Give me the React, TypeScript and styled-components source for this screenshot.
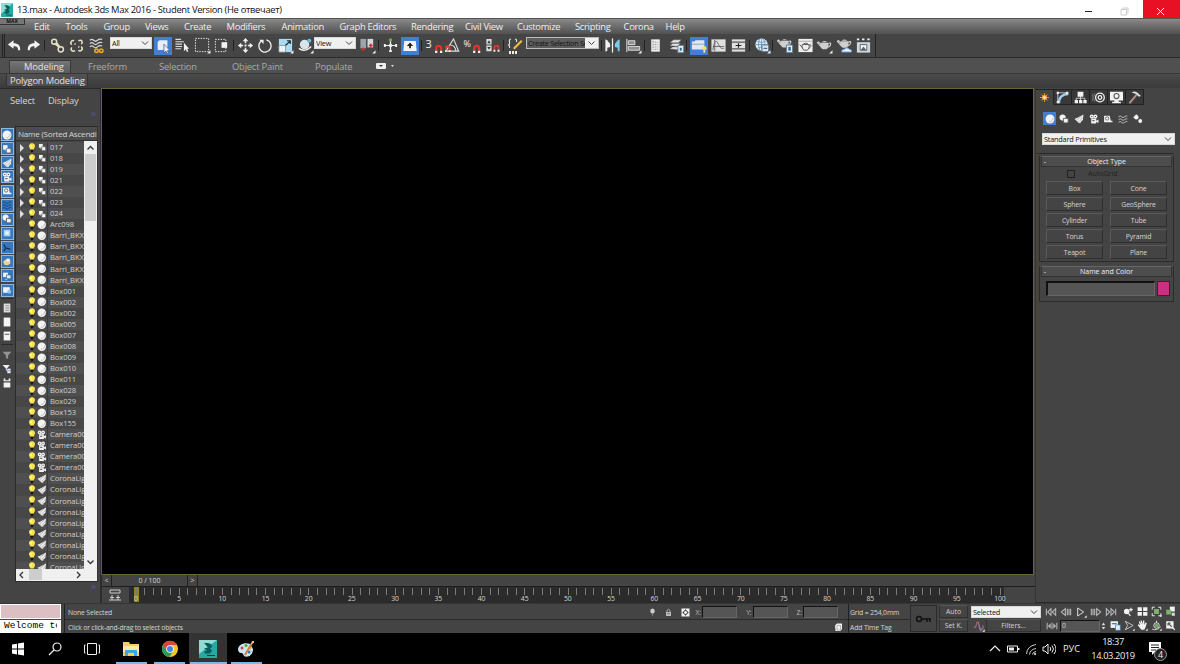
import React from 'react';
import styled, { createGlobalStyle } from 'styled-components';

const GlobalStyle = createGlobalStyle`
  * { box-sizing: border-box; }
  body { margin: 0; background: #444; overflow: hidden; }
`;

/* ---------- icons ---------- */

const W = '#f2f2f2';
const G = '#b9b9b9';
const Flyout = () => <path d="M17.500 14v3.500H14z" fill={W} />;

const Magnet = ({ x = 9, y = 9 }: { x?: number; y?: number }) => (
  <g transform={`translate(${x} ${y})`} fill="none" strokeWidth="2">
    <path d="M1 5V3a2 2 0 0 1 4.400 0V5" stroke="#e0342c" />
    <path d="M1 5v2M5.400 5v2" stroke={W} />
  </g>
);

const Teapot = ({ fill = '#cfcfcf' }: { fill?: string }) => (
  <g fill={fill}>
    <path d="M5 7h8c1 3 0 6-2 7H7C5 13 4 10 5 7z" />
    <path d="M6 6.500Q9 4 12 6.500z" />
    <path d="M5 11 1.500 7l1-.8L5.500 9zM13 8c3-2 4 1 0 4" fill="none" stroke={fill} strokeWidth="1.200" />
  </g>
);

const glyphs: Record<string, React.ReactNode> = {
  undo: <path d="M2 8 8 3.500v3c5 0 7.500 2.500 7 7.500h-2.200c0-3-1-4.200-4.800-4.200v2.700z" fill={W} />,
  redo: <path d="M16 8 10 3.500v3c-5 0-7.500 2.500-7 7.500h2.200c0-3 1-4.200 4.800-4.200v2.700z" fill={W} />,
  link: (
    <g fill="none" stroke="#e4e0c4" strokeWidth="1.600">
      <circle cx="5.500" cy="5" r="2.600" /><circle cx="12.500" cy="13" r="2.800" /><path d="m6 7 5 4M8 6l4 5" />
    </g>
  ),
  unlink: (
    <g fill="none" stroke="#e4e0c4" strokeWidth="1.600">
      <path d="M4 8C1.500 6 4 3 6.500 4M11 4c4-2 5 2 3 3.500M4 11c-2 3 1 5 3.500 3.500M14 10c3 3-1 6-3 4M7 7l1 1M11 10l1 1" />
    </g>
  ),
  bind: (
    <g fill="none">
      <path d="M2 3.500q2-2 4 0t4 0 5-1M2 7q2-2 4 0t4 0 5-1M2 10.500q2-2 4 0t4 0 5-1" stroke="#d5d5d5" strokeWidth="1.300" />
      <circle cx="9" cy="14.500" r="1.800" stroke="#eaa61e" strokeWidth="1.700" /><circle cx="14" cy="14.500" r="1.800" stroke="#eaa61e" strokeWidth="1.700" />
    </g>
  ),
  selectObj: (
    <g>
      <path d="m3 4.500 2-2h9v9l-2 2H3z" fill="#e9eef6" /><path d="M10 7v10l2.300-2.300 1.200 3 1.700-.7-1.300-2.800H17z" fill={W} stroke="#456" strokeWidth=".8" />
    </g>
  ),
  byName: (
    <g>
      <path d="M1.500 2.500h6M1.500 5h9M1.500 7.500h7M1.500 10h7M1.500 12.500h6" stroke="#ddd" strokeWidth="1.200" /><path d="M10.500 6v9l2-2 1.200 3 1.500-.7-1.300-2.800H16z" fill={W} />
    </g>
  ),
  rect: <g><path d="M1.500 1.500h14v14h-14z" fill="none" stroke={W} strokeDasharray="1.500 1.300" /><Flyout /></g>,
  window: (
    <g>
      <path d="M2.500 2.500h11v13h-11z" fill="none" stroke={W} strokeDasharray="1.500 1.300" /><path d="M9 5.500h6v6H9z" fill={W} />
    </g>
  ),
  move: (
    <g>
      <path d="M9 4v10M4 9h10" stroke={W} strokeWidth="1.600" strokeDasharray="2.500 5" /><path d="M8 8h2v2H8zM9 1 6 4.500h6zM9 17l-3-3.500h6zM1 9l3.500-3v6zM17 9l-3.500-3v6z" fill={W} />
    </g>
  ),
  rotate: (
    <g>
      <path d="M5.500 4.300a6.500 6.500 0 1 0 5.500-1.200" fill="none" stroke={W} strokeWidth="1.400" /><path d="M3.500 3H8v4.500z" fill={W} />
    </g>
  ),
  scale: (
    <g>
      <path d="M2 2h14v14H2z" fill="#a9dcf2" /><path d="M2 9h7v7H2z" fill={W} stroke="#689" strokeWidth=".7" /><path d="m9 9 5-5m-3.500 0H14v3.500" fill="none" stroke="#222" strokeWidth="1.200" /><Flyout />
    </g>
  ),
  place: (
    <g>
      <circle cx="8" cy="8" r="5" fill="#d8e4ea" /><circle cx="13" cy="4" r="2.200" fill="#6db9dc" /><path d="M2 12q6 5 13-2" fill="none" stroke={W} strokeWidth="1.500" /><Flyout />
    </g>
  ),
  pivot: (
    <g>
      <path d="M1.500 2h6v10h-6z" fill="#9ba4ae" /><path d="M9 2h6v9H9z" fill="#d5d8dc" /><path d="M2.500 13h4M4.500 11v4M10.500 9h4M12.500 7v4" stroke="#d42b27" strokeWidth="1.500" /><Flyout />
    </g>
  ),
  manip: (
    <g>
      <path d="M9 2v14M2.500 9h13" stroke={W} strokeWidth="1.300" /><path d="m9 6.500 2.500 2.500L9 11.500 6.500 9zM2 7.500h2v3H2zM14 7.500h2v3h-2zM7.500 14h3v2h-3z" fill={W} /><circle cx="9" cy="3" r="1.800" fill="#65b54c" />
    </g>
  ),
  keyboard: (
    <g>
      <path d="M2.500 3.500h13l1 11h-15z" fill="#f4f4f4" /><path d="M9 5 5.500 9H8v2.500h2V9h2.500z" fill="#222" />
    </g>
  ),
  angle: <g><path d="M1 15 9 2l5.500 13zM5.500 8.500q5 0 6 6" fill="none" stroke="#ddd" strokeWidth="1.200" /><Magnet x={-0.500} y={9} /></g>,
  spinner: (
    <g>
      <path d="M2.500 2h5.500v6H2.500zM2.500 9h5.500v6H2.500z" fill="#ddd" /><path d="m5.300 3.500 1.800 3H3.500zM5.300 13.500l-1.800-3h3.600z" fill="#333" /><Magnet x={10} y={8.500} />
    </g>
  ),
  mirror: <g><path d="M1.500 2.500v13l2-1v-3l3-1v-3l-3-4z" fill={W} /><path d="M9 1.500v15" stroke={W} strokeWidth="1.300" /><path d="M16.500 2.500v13l-2-1v-3l-3-1v-3l3-4z" fill="#7ccbee" /></g>,
  align: <g><path d="M2 2v14" stroke={W} /><path d="M3.500 4h7v4h-7zM3.500 10h12v4h-12z" fill="#8f8f8f" stroke="#ddd" /><Flyout /></g>,
  layers: (
    <g>
      <path d="M4.500 2.500h9v13h-9z" fill={W} /><path d="M6.500 4v10M8 5.500h4M8 8h4M8 10.500h4M8 13h4" stroke="#888" strokeDasharray="2 1" />
    </g>
  ),
  layerExp: (
    <g>
      <path d="m2 6 4-3h8l-3 3zM2 9l3-2h8l-3 3zM2 12.500l3-2h8l-3 3z" fill="#e3e3e3" stroke="#666" strokeWidth=".4" /><path d="M10.500 9h6v7.500h-6z" fill="#e3ecf2" stroke="#6c8795" /><path d="M12.500 11.500h2v3h-2z" fill="#236997" />
    </g>
  ),
  ribbon: (
    <g>
      <path d="M1 4h3l1-1.500h10V13H1z" fill="#dfe8f2" /><path d="M1 7h14" stroke="#8c9db0" /><circle cx="15" cy="11.500" r="2.500" fill="#f5de64" /><path d="M14 14h2v2.500h-2z" fill="#eee" />
    </g>
  ),
  curve: <g><path d="M1.500 2.500h15v13h-15z" fill="#e0e0e0" /><path d="M3 14C5 2 7 3 9 8s4 4 6 4M5 3v12M3 10h12" fill="none" stroke="#666" /></g>,
  schematic: (
    <g>
      <path d="M2 2.500h14v13H2z" fill="#e0e0e0" /><path d="M2 5.500h14M2 12.500h14" stroke="#555" strokeWidth="1.300" /><path d="M9 6.500v5M6 9h6" stroke="#222" strokeWidth="1.200" />
    </g>
  ),
  material: (
    <g>
      <circle cx="8" cy="8" r="6.500" fill="#e3edf5" /><path d="M2 8h12M8 2v12M3.500 4.500q4.500 3 9 0M3.500 12q4-3 8 0M6 2q-3 6 0 12M10 2q3 5 1 9" fill="none" stroke="#6b9cc8" /><path d="M8.500 8.500h7v7h-7z" fill="#dce6ee" stroke="#5a7a94" /><path d="M10 12h4" stroke="#346" /><Flyout />
    </g>
  ),
  rSetup: <g><g transform="translate(-1 -3)"><Teapot /></g><path d="M10 8.500h6.500v8H10z" fill="#e4edf3" stroke="#5b7f95" /><path d="M12 10.500h2.500v4H12z" fill="#26668d" /></g>,
  rFrame: <g><path d="M1.500 2h15v14h-15z" fill="#eee" /><path d="M1.500 4.500h15" stroke="#aaa" /><g transform="translate(1.500 2) scale(.85)" fill="none" stroke="#555" strokeWidth="1.200"><path d="M5 7h8c1 3 0 6-2 7H7C5 13 4 10 5 7zM6 6.500Q9 4 12 6.500M5 11 1.500 7M13 8c3-2 4 1 0 4" /></g></g>,
  render: <g><g transform="translate(0 -1)"><Teapot /></g><Flyout /></g>,
  cloud: <g><g transform="translate(0 -2.500)"><Teapot /></g><path d="M6 16c0-3 2-3 3-3 1-2 4-2 5 0 3 0 3 3 2 3z" fill="#e7f2ff" stroke="#5a8ad0" /></g>,
  gallery: <g><path d="M2 5.500h14v11H2z" fill="#d0d7dc" /><path d="M5.500 8h7v6h-7z" fill="#f3f3f3" stroke="#58636a" /><path d="m6 14 3-4 3 4z" fill="#58636a" /><path d="M2 2.500h2.500M7.500 2.500H10M13 2.500h2.500" stroke={W} strokeWidth="2" /></g>,

  /* small scene glyphs */
  bulb: <g><path d="M9 .5C4 .5 2.500 5 4.500 8.500L6.500 12h5l2-3.500C15.500 5 14 .5 9 .5z" fill="#f7e34e" /><path d="M7.500 3.500v4" stroke="#fffbd0" strokeWidth="2" /><path d="M6.500 12h5v2.500L9 17.500l-2.500-3z" fill="#111" /></g>,
  sphere: <g><circle cx="9" cy="9" r="8" fill="#f3f3f3" /><path d="M14.500 7c0 4-3 7-7 7" fill="none" stroke="#bbb" strokeWidth="1.800" /></g>,
  group: <g><path d="M2 2h8v8H2z" fill={W} /><path d="M8 8h8v8H8z" fill={W} stroke="#555" /><path d="m4 10 3 3" stroke={W} /></g>,
  shapes: <g><circle cx="6.500" cy="6.500" r="5.500" fill={W} /><path d="M8 8h8.500v8H8z" fill={W} stroke="#555" strokeWidth="1.500" /></g>,
  light: <g><path d="m17 1-1 10-6 5-8-7z" fill={W} /><path d="m1 9 8 7.500 4-1-9-8z" fill="#ddd" /><path d="m15 3-9 7M16 6l-6 7" stroke="#888" /></g>,
  camera: <g fill={W}><circle cx="5" cy="4.500" r="3.600" /><circle cx="11.500" cy="4.500" r="3.600" /><path d="M4 8h9v9H4zM13 12l4-2v6l-4-2z" /><path d="M4 4.500h2M10.500 4.500h2M6 12h4" stroke="#333" strokeWidth="1.600" /></g>,
  tape: <g><path d="M2 3h10l2 9h3v3H2z" fill={W} /><circle cx="7.500" cy="8" r="3" fill="none" stroke="#666" strokeWidth="1.600" /></g>,
  waves: <path d="M1 5q3-3 5.500 0T12 5t5-1M1 10q3-3 5.500 0t5.500 0 5-1M1 15q3-3 5.500 0t5.500 0 5-1" fill="none" stroke="currentColor" strokeWidth="1.600" />,
  gears: <g fill={W}><circle cx="6" cy="6" r="4" /><circle cx="13" cy="12.500" r="3.500" /><path d="M5 1h2v3H5zM1 5h3v2H1z" /></g>,
  box: <g><path d="M3 3h12v12H3z" fill="#9fd3f4" /><path d="M6 6h6v6H6z" fill={W} /></g>,
  bone: <path d="m3 3 4 6 8 2M7 9l-4 6" fill="none" stroke="#0d2d50" strokeWidth="2" />,
  hand: <g><path d="M2 8q5-5 8-3l5 1v6l-5 3-6-1z" fill="#f0cf94" /><path d="M8 3h6v5H8z" fill={W} /></g>,
  import: <g><path d="M2 3h9v8H2z" fill={W} /><path d="M8 7h8v7H8z" fill="#dcecff" stroke="#245" /><path d="M5 15h5" stroke={W} /></g>,
  frozen: <g><path d="M2 4h12v10H2z" fill={W} /><circle cx="13" cy="12" r="3.500" fill="#8dc4f2" /></g>,
  page1: <g><path d="M3 1h12v16H3z" fill="#ddd" /><path d="M6 5h7M6 9h7M6 13h7" stroke="#888" strokeWidth="1.500" /></g>,
  page2: <path d="M3 1h12v16H3z" fill="#f3f3f3" />,
  page3: <g><path d="M3 1h12v16H3z" fill="#f3f3f3" /><path d="M5 6h8" stroke="#666" strokeWidth="2" /></g>,
  funnel: <path d="M1 3h16l-6 7v6l-4-2v-4z" fill="#929292" />,
  funnel2: <g><path d="M1 2h13l-5 6v4H7V8z" fill={W} /><path d="M9 8h7v9H9z" fill="#eee" stroke="#347" /><path d="M11 12h4" stroke="#347" /></g>,
  stack: <path d="M3 1h3v3h6V1h3v5H3zM3 8h12v9H3z" fill={W} />,

  /* command panel tabs */
  create: <g><path d="M9 0v18M0 9h18M3 3l12 12M15 3 3 15" stroke="#f39b31" strokeWidth="1.800" /><circle cx="9" cy="9" r="5" fill="#ffa63a" /><circle cx="9" cy="9" r="2.500" fill="#fff3c0" /></g>,
  modify: <g><path d="M4 17C4 9 9 4 17 4" fill="none" stroke="#9ccff0" strokeWidth="3.500" /><path d="M2.500 16V2.500H16" fill="none" stroke={W} strokeWidth="1" /><path d="M1 1h3v3H1zM14 1h3v3h-3zM1 14h3v3H1z" fill={W} /></g>,
  hierarchy: <g><path d="M5 1h8v7H5zM1 12.500h4.500V17H1zM7 12.500h4.500V17H7zM13 12.500h4.500V17H13z" fill={W} /><path d="M9 7v7M3 14v-4h12v4" fill="none" stroke={W} /></g>,
  motion: <g fill="none" stroke={W}><circle cx="11" cy="9" r="6" strokeWidth="1.800" /><circle cx="11" cy="9" r="2.500" strokeWidth="1.800" /><path d="M4 3q-4 6 0 12M1 4q-2 5 0 10" stroke="#888" /></g>,
  display: <g><path d="M0 1h18v12H0zM6 13h6v2h3v2H3v-2h3z" fill={W} /><circle cx="9" cy="7" r="3.500" fill="none" stroke="#555" strokeWidth="1.500" /></g>,
  utils: <g><path d="m1 16 10-12 2 2L3 18z" fill="#b58d86" /><path d="M5 2q5-3 9 1l4 4-3 1-4-4q-3-1-6-2z" fill="#ddd" /></g>,

  /* transport and view navigation */
  first: <g fill="none" stroke={G} strokeWidth="1.600"><path d="M2 4v10M9 4 4 9l5 5zM16 4l-5 5 5 5z" /></g>,
  prev: <g fill="none" stroke={G} strokeWidth="1.600"><path d="M8 4 2 9l6 5zM11 4v10M13.500 4v10M16 4v10" /></g>,
  play: <g><path d="M4 3v12l9-6z" fill="none" stroke="#ddd" strokeWidth="1.500" /><Flyout /></g>,
  next: <g fill="none" stroke={G} strokeWidth="1.600"><path d="m10 4 6 5-6 5zM7 4v10M4.500 4v10M2 4v10" /></g>,
  last: <g fill="none" stroke={G} strokeWidth="1.600"><path d="M16 4v10M9 4l5 5-5 5zM2 4l5 5-5 5z" /></g>,
  keymode: <g fill={G}><path d="M1 4h1.500v10H1zM8.300 4h1.500v10H8.300zM15.500 4H17v10h-1.500zM3 9l4-4v8zM15 9l-4-4v8z" /></g>,
  zoom: <g><circle cx="6" cy="9" r="4.500" fill={W} /><path d="m9 12 3 4M13 3v6M10 6h6" stroke={W} strokeWidth="2" /></g>,
  zoomAll: <g fill={W}><path d="M1 2h7v6H1zM10 2h7v6h-7zM1 10h7v6H1zM10 10h7v6h-7z" /><path d="M9 4v11M4 9h11" stroke="#444" /></g>,
  extents: <g><path d="M2 6V2h4M12 2h4v4M16 12v4h-4M6 16H2v-4" fill="none" stroke={W} strokeWidth="1.600" /><path d="M5 5h8v8H5z" fill="#7eb36b" /><Flyout /></g>,
  extentsAll: <g><path d="M8 1h8v8H8z" fill={W} /><path d="M2 6h8v8H2z" fill="#7eb36b" /><path d="M11 11h5v5h-5z" fill="#ddd" /></g>,
  timeCfg: <g><path d="M1 2h12v11H1z" fill={W} /><path d="M3 5h8v2H3z" fill="#3977bd" /><path d="M9 8h8v9H9z" fill="#dceeff" stroke="#2d67a0" /></g>,
  fov: <g><path d="m2 2 13 7L2 16l4-7z" fill="none" stroke="#ddd" strokeWidth="1.300" /><Flyout /></g>,
  pan: <g><path d="m1 8 2-1 2 2-2-6 2-1 2 5-1-6h2l1 6 1-6h2v7l2-4 2 1-2 7-2 4H7z" fill={W} /><Flyout /></g>,
  orbit: <g><circle cx="9" cy="9" r="4.500" fill="none" stroke="#ddd" strokeWidth="1.600" /><path d="M9 1v4M2 15q7 3 14-4" stroke="#ddd" fill="none" strokeWidth="1.500" /><circle cx="9" cy="9" r="3" fill="#75a965" /><Flyout /></g>,
  maxVp: <g><path d="M2 2h12v12H2z" fill={W} /><path d="M5 5h4M5 5v4M6 6l5 5" stroke="#555" strokeWidth="2" /><path d="m12 12 4 4" stroke={W} strokeWidth="2" /></g>,
  pin: <g><ellipse cx="9" cy="6" rx="4.500" ry="5" fill="#ccc" /><path d="M7 10h4l-2 7z" fill="#888" /></g>,
  lock: <g><path d="M4 8h10v8H4z" fill="#bbb" /><path d="M6 8V5q3-5 6 0v3" fill="none" stroke="#bbb" strokeWidth="1.800" /><path d="M6 11h6" stroke="#444" /></g>,
  absMode: <g><path d="M1 1h16v16H1z" fill={W} /><circle cx="9" cy="9" r="4" fill="none" stroke="#333" strokeWidth="1.800" /><path d="M9 2v4M9 12v4M2 9h4M12 9h4" stroke="#333" /></g>,
  tagCube: <g><path d="m2 5 4-4h10v11l-3 4H3z" fill={W} /><path d="M6 5h7v9H6z" fill="none" stroke="#777" /></g>,
  tangent: <g><path d="M1 11h3Q7-4 9 8t4 6q3 0 2-6" fill="none" stroke="#b86d76" strokeWidth="1.600" /><path d="M9 7q2 9 5 6" fill="none" stroke="#6e7ec0" strokeWidth="1.600" /><Flyout /></g>,
};

const Svg = styled.svg<{ $s: number }>`
  display: block;
  flex: none;
  width: ${p => p.$s}px;
  height: ${p => p.$s}px;
`;
const Icon = ({ name, size = 18 }: { name: string; size?: number }) => (
  <Svg $s={size} viewBox="0 0 18 18">{glyphs[name]}</Svg>
);

/* ---------- shell ---------- */

const Shell = styled.div`
  width: 1180px;
  height: 664px;
  display: flex;
  flex-direction: column;
  overflow: hidden;
  background: #444;
  color: #d6d6d6;
  font: 8px/11px "Open Sans", "Noto Sans", sans-serif;
  white-space: nowrap;
`;

const TitleBar = styled.header`
  height: 18px;
  flex: none;
  display: flex;
  align-items: center;
  background: #fff;
  color: #111;
  font: 9.400px/18px "Open Sans", sans-serif;
`;
const Logo = styled.svg`
  width: 12px;
  height: 14px;
  margin: 2px 4px 0 1px;
`;
const TitleText = styled.span`
  flex: 1;
  padding-top: 1px;
  letter-spacing: -0.33px;
`;
const WinButton = styled.div<{ $close?: boolean }>`
  width: ${p => (p.$close ? 37 : 36)}px;
  height: 18px;
  display: flex;
  align-items: center;
  justify-content: center;
  padding-right: 2px;
  background: ${p => (p.$close ? '#e81123' : 'transparent')};
  svg { width: 9px; height: 9px; margin-top: 4px; }
`;

const MenuBar = styled.nav`
  height: 16px;
  flex: none;
  display: flex;
  border-top: 1px solid #555;
  background: linear-gradient(#8b8b8b, #777 30%, #515151);
  color: #f0f0f0;
  font: 9.400px/15px "Open Sans", sans-serif;
`;
const MaxButton = styled.div`
  width: 25px;
  height: 6px;
  margin-right: 9px;
  background: #777;
  border: solid #333;
  border-width: 0 1px 1px 0;
  color: #111;
  font: bold 5px/5px "Open Sans", sans-serif;
  text-align: center;
`;
const MenuItem = styled.span<{ $w: number }>`
  width: ${p => p.$w}px;
  letter-spacing: -0.28px;
`;

const ToolRow = styled.div`
  height: 24px;
  flex: none;
  display: flex;
  background: #454545;
  border-bottom: 1px solid #2b2b2b;
`;
const ToolBar = styled.div`
  width: 876px;
  display: flex;
  align-items: center;
  padding-left: 5px;
  border-right: 1px solid #222;
  background: linear-gradient(90deg, transparent 2px, #222 2px 3px, transparent 3px 4px, #222 4px 5px, transparent 5px);
`;
const Tool = styled.div<{ $g: number; $on?: boolean }>`
  width: 18px;
  height: 18px;
  flex: none;
  display: flex;
  align-items: center;
  justify-content: center;
  margin-left: ${p => p.$g}px;
  background: ${p => (p.$on ? '#3f7fd6' : 'transparent')};
  color: ${W};
`;
const Sep = styled.div<{ $g: number }>`
  width: 1px;
  height: 11px;
  flex: none;
  margin: 0 1px 0 ${p => p.$g}px;
  background: #222;
`;
const Combo = styled.div<{ $w: number; $h?: number; $g?: number; $dark?: boolean }>`
  width: ${p => p.$w}px;
  height: ${p => p.$h ?? 12}px;
  flex: none;
  display: flex;
  justify-content: space-between;
  align-items: center;
  margin-left: ${p => p.$g ?? 0}px;
  border: 1px solid ${p => (p.$dark ? '#bbb' : '#d8d8d8')};
  background: ${p => (p.$dark ? '#5d5d5d' : '#f0f0f0')};
  color: #111;
  font: 7.300px/10px "Open Sans", sans-serif;
  letter-spacing: ${p => (p.$dark ? -0.3 : -0.2)}px;
  padding-left: 1px;
  overflow: hidden;
`;
const ComboText = styled.span`
  flex: 1;
  overflow: hidden;
`;
const ComboArrow = styled.svg<{ $w: number }>`
  width: ${p => p.$w}px;
  height: 100%;
  flex: none;
  background: #f0f0f0;
`;
const Select = ({ w, h, g, dark, children }: { w: number; h?: number; g?: number; dark?: boolean; children: string }) => (
  <Combo $w={w} $h={h} $g={g} $dark={dark}>
    <ComboText>{children}</ComboText>
    <ComboArrow $w={dark ? 13 : 12} viewBox="0 0 12 10"><path d="m3 3.500 3 3 3-3" fill="none" stroke="#444" /></ComboArrow>
  </Combo>
);
const ToolLift = styled.div`
  display: flex;
  align-self: flex-start;
  margin-top: 3px;
`;
const SnapText = styled.span<{ $s: number }>`
  width: 9px;
  align-self: flex-start;
  font: ${p => p.$s}px/13px "Open Sans", sans-serif;
`;
const SnapMagnet = styled.svg`
  width: 8px;
  height: 9px;
  margin-bottom: 1px;
  align-self: flex-end;
`;
const NamedSets = styled.div`
  width: 18px;
  display: flex;
  svg { width: 18px; height: 18px; }
`;

const RibbonTabs = styled.div`
  height: 15px;
  flex: none;
  display: flex;
  align-items: flex-end;
  padding-left: 9px;
  background: #505050;
  color: #a9a9a9;
  font: 9.400px/13px "Open Sans", sans-serif;
`;
const RibbonTab = styled.div<{ $w: number; $active?: boolean; $pad?: number }>`
  width: ${p => p.$w}px;
  height: 13px;
  padding-left: ${p => p.$pad ?? 0}px;
  letter-spacing: -0.2px;
  ${p => p.$active && `
    background: linear-gradient(#777, #5a5a5a);
    border: 1px solid #383838;
    border-bottom: 0;
    line-height: 12px;
    letter-spacing: -0.1px;
    color: #e2e2e2;
  `}
`;
const RibbonPanel = styled.div`
  height: 15px;
  flex: none;
  padding: 0 0 0 6px;
  background: linear-gradient(#4a4a4a, #3b3b3b);
  border-top: 1px solid #383838;
`;
const RibbonGroup = styled.div`
  width: 82px;
  height: 13px;
  padding-left: 3px;
  border: 1px solid #333;
  border-top: 0;
  background: #505050;
  color: #e0e0e0;
  font: 9.400px/13px "Open Sans", sans-serif;
  letter-spacing: -0.2px;
`;

const Body = styled.main`
  height: 515px;
  flex: none;
  display: grid;
  grid-template-columns: 102px 933px 145px;
`;

/* ---------- scene explorer ---------- */

const Explorer = styled.aside`
  display: flex;
  flex-direction: column;
  border-top: 1px solid #2a2a2a;
  border-right: 2px solid #2d2d2d;
`;
const ExplorerMenu = styled.div`
  height: 20px;
  display: flex;
  gap: 13px;
  padding: 5px 0 0 10px;
  font: 9.400px/13px "Open Sans", sans-serif;
  letter-spacing: -0.15px;
`;
const Chevrons = styled.div<{ $h: number }>`
  height: ${p => p.$h}px;
  padding-right: 4px;
  text-align: right;
  color: #55559a;
  font: 10px/9px "Open Sans", sans-serif;
`;
const ExplorerBody = styled.div`
  display: flex;
  height: 455px;
`;
const FilterStrip = styled.div`
  width: 15px;
  display: flex;
  flex-direction: column;
  align-items: center;
  padding: 1px 1px 0 0;
`;
const Filter = styled.div<{ $on?: boolean }>`
  width: 13px;
  height: 13px;
  flex: none;
  margin-bottom: 1.150px;
  display: flex;
  align-items: center;
  justify-content: center;
  color: #123f77;
  background: ${p => (p.$on ? '#3777be' : 'transparent')};
  border: 1px solid ${p => (p.$on ? '#90b7df' : 'transparent')};
`;
const FilterRule = styled.div`
  width: 12px;
  height: 4px;
  flex: none;
  border-top: 1px solid #2b2b2b;
`;
const ListBox = styled.div`
  width: 83px;
  height: 456px;
  margin-top: -1px;
  display: flex;
  flex-direction: column;
  border: 1px solid #2b2b2b;
  border-right-color: #333;
`;
const ListHead = styled.div`
  height: 14px;
  flex: none;
  padding-left: 2px;
  overflow: hidden;
  background: #4d4d4d;
  border-bottom: 1px solid #333;
  font: 8px/13px "Open Sans", sans-serif;
  letter-spacing: -0.2px;
`;
const ListMain = styled.div`
  height: 428px;
  display: flex;
`;
const Rows = styled.div`
  width: 68px;
  padding-top: 1px;
  overflow: hidden;
`;
const Row = styled.div`
  height: 11.050px;
  display: flex;
  align-items: center;
  background: #4f4f4f;
  &:nth-child(even) { background: #474747; }
`;
const Expander = styled.svg`
  width: 6px;
  height: 8px;
  flex: none;
  margin: 0 2px 0 3px;
`;
const IconCell = styled.span<{ $w: number; $line?: boolean }>`
  width: ${p => p.$w}px;
  height: 100%;
  flex: none;
  display: flex;
  align-items: center;
  justify-content: center;
  border-right: ${p => (p.$line ? '1px solid #3b3b3b' : '0')};
`;
const RowName = styled.span`
  padding-left: 2px;
  color: #cfcfcf;
  font: 7.600px/11px "Open Sans", sans-serif;
  letter-spacing: -0.08px;
`;
const VScroll = styled.div`
  width: 13px;
  display: flex;
  flex-direction: column;
  justify-content: space-between;
  background: #f0f0f0;
  svg { width: 13px; height: 13px; flex: none; }
`;
const VThumb = styled.div`
  height: 67px;
  margin: 0 1px auto;
  background: #cdcdcd;
`;
const HScroll = styled.div`
  height: 12px;
  display: flex;
  background: #f0f0f0;
  svg { width: 12px; height: 12px; flex: none; }
`;
const HThumb = styled.div`
  width: 13px;
  height: 11px;
  margin: 0 30px 0 1px;
  background: #cdcdcd;
`;

const filters = ['sphere', 'group', 'light', 'camera', 'tape', 'waves', 'shapes', 'box', 'bone', 'hand', 'import', 'frozen'];

const scene: [string, string][] = [
  ...['017', '018', '019', '021', '022', '023', '024'].map(n => ['group', n] as [string, string]),
  ['sphere', 'Arc098'],
  ...Array(5).fill(['sphere', 'Barri_BKXX']),
  ...['001', '002', '002', '005', '007', '008', '009', '010', '011', '028', '029', '153', '155'].map(n => ['sphere', 'Box' + n] as [string, string]),
  ...Array(4).fill(['camera', 'Camera00']),
  ...Array(9).fill(['light', 'CoronaLig']),
];

const SceneExplorer = () => (
  <Explorer>
    <ExplorerMenu><span>Select</span><span>Display</span></ExplorerMenu>
    <Chevrons $h={18}>»</Chevrons>
    <ExplorerBody>
      <FilterStrip>
        {filters.map(f => <Filter key={f} $on><Icon name={f} size={10} /></Filter>)}
        <FilterRule />
        {['page1', 'page2', 'page3'].map(f => <Filter key={f}><Icon name={f} size={10} /></Filter>)}
        <FilterRule />
        {['funnel', 'funnel2', 'stack'].map(f => <Filter key={f}><Icon name={f} size={10} /></Filter>)}
      </FilterStrip>
      <ListBox>
        <ListHead>Name (Sorted Ascendi</ListHead>
        <ListMain>
          <Rows>
            {scene.map(([icon, name], i) => (
              <Row key={i}>
                <Expander viewBox="0 0 6 8">{i < 7 && <path d="M1 0v8L5 4z" fill="#e0e0e0" />}</Expander>
                <IconCell $w={10}><Icon name="bulb" size={10} /></IconCell>
                <IconCell $w={11} $line><Icon name={icon} size={icon === 'group' ? 8.500 : 9.500} /></IconCell>
                <RowName>{name}</RowName>
              </Row>
            ))}
          </Rows>
          <VScroll>
            <svg viewBox="0 0 13 13"><path d="m3.500 8.500 3-3 3 3" fill="none" stroke="#333" strokeWidth="1.300" /></svg>
            <VThumb />
            <svg viewBox="0 0 13 13"><path d="m3.500 4.500 3 3 3-3" fill="none" stroke="#333" strokeWidth="1.300" /></svg>
          </VScroll>
        </ListMain>
        <HScroll>
          <svg viewBox="0 0 12 12"><path d="m7 3-3 3 3 3" fill="none" stroke="#333" strokeWidth="1.300" /></svg>
          <HThumb />
          <svg viewBox="0 0 12 12"><path d="m5 3 3 3-3 3" fill="none" stroke="#333" strokeWidth="1.300" /></svg>
        </HScroll>
      </ListBox>
    </ExplorerBody>
    <Chevrons $h={10}>»</Chevrons>
  </Explorer>
);

/* ---------- viewport and time line ---------- */

const Center = styled.section`
  display: flex;
  flex-direction: column;
`;
const Viewport = styled.div`
  width: 933px;
  height: 487px;
  margin-left: -1px;
  background: #000;
  border: 1px solid #6b6430;
`;
const TimeSlider = styled.div`
  height: 12px;
  display: flex;
  border-bottom: 1px solid #1e1e1e;
  font-size: 7px;
  line-height: 12px;
  text-align: center;
`;
const SliderStep = styled.div`
  width: 10px;
  border-right: 1px solid #222;
`;
const SliderHandle = styled.div`
  width: 76px;
  border-right: 1px solid #222;
`;
const Track = styled.div`
  height: 16px;
  display: flex;
  background: linear-gradient(90deg, #444 27px, #2b2b2b 27px 902px, #444 902px);
`;
const TrackIcon = styled.svg`
  width: 12px;
  height: 12px;
  margin: 2px 10.500px 0 7px;
`;
const Ruler = styled.div`
  display: flex;
  position: relative;
`;
const Tick = styled.div`
  width: 8.641px;
  height: 16px;
  flex: none;
  padding-top: 8px;
  display: flex;
  justify-content: center;
  position: relative;
  background: linear-gradient(#7a7a7a, #7a7a7a) 4px 1px / 1px 7px no-repeat;
  font: 6.800px/8px "Open Sans", sans-serif;
  letter-spacing: -0.1px;
`;
const Playhead = styled.div`
  position: absolute;
  left: 2px;
  top: 0;
  width: 5px;
  height: 15px;
  background: #8f861f;
`;

const Timeline = () => (
  <>
    <TimeSlider>
      <SliderStep>&lt;</SliderStep><SliderHandle>0 / 100</SliderHandle><SliderStep>&gt;</SliderStep>
    </TimeSlider>
    <Track>
      <TrackIcon viewBox="0 0 12 12">
        <path d="M1 1h10v3H1zM3 6v5M9 6v5M1 8.500h4M7 8.500h4M0 11h12" fill="none" stroke="#ccc" />
      </TrackIcon>
      <Ruler>
        <Playhead />
        {Array.from({ length: 101 }, (_, i) => <Tick key={i}>{i % 5 === 0 ? i : ''}</Tick>)}
      </Ruler>
    </Track>
  </>
);

/* ---------- command panel ---------- */

const Command = styled.aside`
  border-left: 1px solid #353535;
  border-bottom: 1px solid #2a2a2a;
`;
const PanelTabs = styled.div`
  display: flex;
  height: 17px;
  padding-top: 1px;
`;
const PanelTab = styled.div<{ $active?: boolean }>`
  width: 18px;
  height: 16px;
  display: flex;
  align-items: center;
  justify-content: center;
  background: ${p => (p.$active ? '#444' : '#383838')};
  border: 1px solid #222;
  border-left-width: 0;
  border-bottom-color: ${p => (p.$active ? '#444' : '#222')};
`;
const Categories = styled.div`
  display: flex;
  align-items: center;
  gap: 1.700px;
  height: 13px;
  margin: 7px 0 8px 7px;
`;
const Category = styled.div<{ $on?: boolean }>`
  width: 13px;
  height: 13px;
  display: flex;
  align-items: center;
  justify-content: center;
  color: #c8c8c8;
  background: ${p => (p.$on ? '#3f7fd6' : 'transparent')};
`;
const PanelRule = styled.div`
  width: 137px;
  height: 1px;
  margin: 8px 0 8px 1px;
  background: #2a2a2a;
`;
const Rollout = styled.div<{ $h: number }>`
  width: 135px;
  height: ${p => p.$h}px;
  margin: 0 0 10px 3px;
  padding: 0 0 0 6px;
  border: 1px solid #2b2b2b;
  border-top: 0;
`;
const RolloutLift = styled.div`
  margin-top: -6px;
`;
const RolloutHead = styled.div`
  display: flex;
  width: 131px;
  height: 11px;
  margin: 0 0 1px -5px;
  border: 1px solid #333;
  border-top-color: #666;
  background: #4d4d4d;
  font: 7px/9px "Open Sans", sans-serif;
  color: #eee;
`;
const RolloutTitle = styled.span`
  flex: 1;
  padding-right: 4px;
  text-align: center;
`;
const AutoGrid = styled.div`
  display: flex;
  align-items: center;
  height: 13px;
  padding: 0 0 2px 21px;
  gap: 13px;
  color: #1f1f1f;
  font: 7px/11px "Open Sans", sans-serif;
`;
const CheckBox = styled.span`
  width: 8px;
  height: 8px;
  border: 1px solid #222;
`;
const ButtonGrid = styled.div`
  display: grid;
  grid-template-columns: 57px 57px;
  column-gap: 7px;
  row-gap: 2px;
`;
const ObjectButton = styled.div`
  height: 14px;
  border: 1px solid #2e2e2e;
  border-top-color: #5a5a5a;
  border-left-color: #5a5a5a;
  text-align: center;
  font: 6.900px/13px "Open Sans", sans-serif;
  letter-spacing: -0.15px;
`;
const NameRow = styled.div`
  display: flex;
  gap: 2px;
  padding-top: 3px;
`;
const NameField = styled.div`
  width: 109px;
  height: 15px;
  flex: none;
  background: #555;
  border: 1px solid #666;
  border-top: 2px solid #111;
  border-left: 2px solid #111;
`;
const Swatch = styled.div`
  width: 13px;
  height: 15px;
  flex: none;
  background: #cc2e84;
  border: 1px solid #2b2b2b;
`;

const CommandPanel = () => (
  <Command>
    <PanelTabs>
      {['create', 'modify', 'hierarchy', 'motion', 'display', 'utils'].map((n, i) => (
        <PanelTab key={n} $active={i === 0}><Icon name={n} size={i === 0 ? 9 : 13} /></PanelTab>
      ))}
    </PanelTabs>
    <Categories>
      {['sphere', 'shapes', 'light', 'camera', 'tape', 'waves', 'gears'].map((n, i) => (
        <Category key={n} $on={i === 0}><Icon name={n} size={10} /></Category>
      ))}
    </Categories>
    <Select w={133} h={12} g={6}>Standard Primitives</Select>
    <PanelRule />
    <RolloutLift />
    <Rollout $h={106}>
      <RolloutHead>&nbsp;-<RolloutTitle>Object Type</RolloutTitle></RolloutHead>
      <AutoGrid><CheckBox />AutoGrid</AutoGrid>
      <ButtonGrid>
        {['Box', 'Cone', 'Sphere', 'GeoSphere', 'Cylinder', 'Tube', 'Torus', 'Pyramid', 'Teapot', 'Plane'].map(n => (
          <ObjectButton key={n}>{n}</ObjectButton>
        ))}
      </ButtonGrid>
    </Rollout>
    <RolloutLift />
    <Rollout $h={36}>
      <RolloutHead>&nbsp;-<RolloutTitle>Name and Color</RolloutTitle></RolloutHead>
      <NameRow><NameField /><Swatch /></NameRow>
    </Rollout>
  </Command>
);

/* ---------- status bar ---------- */

const Status = styled.footer`
  height: 30px;
  flex: none;
  display: flex;
  border-top: 1px solid #363636;
  font-size: 6.800px;
  letter-spacing: -0.12px;
`;
const Listener = styled.div`
  width: 61px;
  display: flex;
  flex-direction: column;
  letter-spacing: 0;
`;
const Macro = styled.div`
  height: 15px;
  border: 1px solid #fff;
  background: #dcbfc2;
`;
const Welcome = styled.div`
  height: 13px;
  margin-top: 1px;
  padding-left: 4px;
  border-right: 4px solid #fff;
  overflow: hidden;
  background: #fff;
  color: #000;
  font: 9.500px/12px "Liberation Mono", monospace;
`;
const Lines = styled.div`
  width: 784px;
  display: flex;
  flex-direction: column;
  margin-left: 3px;
  border-left: 1px solid #222;
`;
const Line = styled.div<{ $pad?: number }>`
  height: 16px;
  display: flex;
  align-items: center;
  padding: 1px 0 0 ${p => p.$pad ?? 3}px;
  border-bottom: 1px solid #2a2a2a;
  &:last-child { height: 13px; padding-top: 2px; border-bottom: 0; }
`;
const LineText = styled.span`
  flex: 1;
`;
const LongText = styled(LineText)`
  letter-spacing: -0.18px;
`;
const StatusIcon = styled.span`
  width: 16.500px;
  display: flex;
  justify-content: center;
`;
const Coord = styled.div<{ $w: number }>`
  width: ${p => p.$w}px;
  display: flex;
  align-items: center;
  justify-content: flex-end;
  gap: 1px;
  color: #b9b9b9;
`;
const CoordField = styled.div`
  width: 35px;
  height: 12px;
  background: #555;
  border: 1px solid #666;
  border-top-color: #111;
  border-left-color: #111;
`;
const GridInfo = styled.div`
  width: 62px;
  display: flex;
  flex-direction: column;
  border-left: 1px solid #222;
`;
const KeyButton = styled.div`
  width: 27px;
  height: 27px;
  margin: 1px 2px 0 0;
  display: flex;
  align-items: center;
  justify-content: center;
  border: 1px solid #2b2b2b;
  svg { width: 17px; height: 10px; }
`;
const Stack = styled.div<{ $w: number }>`
  width: ${p => p.$w}px;
  display: flex;
  flex-direction: column;
  gap: 1px;
  padding-top: 1px;
`;
const FlatButton = styled.div<{ $w: number }>`
  width: ${p => p.$w}px;
  height: 13px;
  border: 1px solid #303030;
  border-top-color: #555;
  text-align: center;
  line-height: 12px;
  letter-spacing: 0;
`;
const StackRow = styled.div`
  height: 13px;
  display: flex;
  align-items: center;
`;
const NavCell = styled.span<{ $w: number }>`
  width: ${p => p.$w}px;
  display: flex;
  justify-content: center;
`;
const FrameField = styled.div`
  width: 40px;
  height: 12px;
  padding-left: 1px;
  background: #555;
  border: 1px solid #666;
  border-top-color: #111;
  border-left-color: #111;
  line-height: 10px;
`;
const SpinArrows = styled.svg`
  width: 7px;
  height: 12px;
`;

const StatusBar = () => (
  <Status>
    <Listener><Macro /><Welcome>Welcome to</Welcome></Listener>
    <Lines>
      <Line>
        <LineText>None Selected</LineText>
        <StatusIcon><Icon name="pin" size={9} /></StatusIcon>
        <StatusIcon><Icon name="lock" size={9} /></StatusIcon>
        <StatusIcon><Icon name="absMode" size={9} /></StatusIcon>
        <Coord $w={43.500}>X:<CoordField /></Coord>
        <Coord $w={50.500}>Y:<CoordField /></Coord>
        <Coord $w={50.500}>Z:<CoordField /></Coord>
        <NavCell $w={10} />
      </Line>
      <Line>
        <LongText>Click or click-and-drag to select objects</LongText>
        <StatusIcon><Icon name="tagCube" size={9} /></StatusIcon>
        <NavCell $w={1.500} />
      </Line>
    </Lines>
    <GridInfo><Line $pad={1}>Grid = 254,0mm</Line><Line $pad={1}>Add Time Tag</Line></GridInfo>
    <KeyButton>
      <svg viewBox="0 0 17 10"><circle cx="4" cy="5" r="2.500" fill="none" stroke="#111" strokeWidth="1.500" /><path d="M6 5h10M12 5v3M15 5v3" stroke="#111" strokeWidth="1.500" /></svg>
    </KeyButton>
    <Stack $w={32}><FlatButton $w={29}>Auto</FlatButton><FlatButton $w={29}>Set K.</FlatButton></Stack>
    <Stack $w={72}>
      <StackRow><Select w={70} h={12}>Selected</Select></StackRow>
      <StackRow><NavCell $w={15}><Icon name="tangent" size={12} /></NavCell><FlatButton $w={55}>Filters...</FlatButton></StackRow>
    </Stack>
    <Stack $w={137}>
      <StackRow>
        {['first', 'prev', 'play', 'next', 'last'].map(n => <NavCell key={n} $w={15.200}><Icon name={n} size={12} /></NavCell>)}
        <NavCell $w={2} />
        {['zoom', 'zoomAll', 'extents', 'extentsAll'].map(n => <NavCell key={n} $w={14.300}><Icon name={n} size={11} /></NavCell>)}
      </StackRow>
      <StackRow>
        <NavCell $w={17}><Icon name="keymode" size={12} /></NavCell>
        <FrameField>0</FrameField>
        <SpinArrows viewBox="0 0 8 12"><path d="M4 2 2 5h4zM4 10 2 7h4z" fill="#ddd" /></SpinArrows>
        <NavCell $w={2} />
        {['timeCfg', 'fov', 'pan', 'orbit', 'maxVp'].map(n => <NavCell key={n} $w={13.600}><Icon name={n} size={11} /></NavCell>)}
      </StackRow>
    </Stack>
  </Status>
);

/* ---------- windows taskbar ---------- */

const Taskbar = styled.div`
  height: 31px;
  flex: none;
  display: flex;
  background: #000;
  color: #eee;
`;
const Task = styled.div<{ $w: number; $open?: boolean; $active?: boolean }>`
  width: ${p => p.$w}px;
  height: 31px;
  display: flex;
  align-items: center;
  justify-content: center;
  background: ${p => (p.$active ? '#333' : 'transparent')};
  ${p => p.$open && `background-image: linear-gradient(#76b9ed, #76b9ed); background-size: ${p.$active ? 37 : 31}px 2px; background-position: center bottom; background-repeat: no-repeat;`}
  svg { width: 18px; height: 18px; }
`;
const Tray = styled.div`
  flex: 1;
  display: flex;
  align-items: center;
  justify-content: flex-end;
  font: 9.300px/14px "Open Sans", sans-serif;
`;
const TrayCell = styled.div<{ $w: number }>`
  width: ${p => p.$w}px;
  display: flex;
  justify-content: center;
  text-align: center;
  svg { width: 14px; height: 14px; }
`;
const Clock = styled.div`
  width: 56px;
  text-align: center;
  letter-spacing: -0.4px;
`;
const Notice = styled.div`
  position: relative;
  width: 36px;
  height: 31px;
  margin: 0 3px 0 0;
  padding: 9px 0 0 7px;
  svg { display: block; width: 14px; height: 13px; }
`;
const Badge = styled.div`
  position: absolute;
  left: 13px;
  top: 15px;
  width: 13px;
  height: 13px;
  border: 1px solid #999;
  border-radius: 50%;
  background: #222;
  text-align: center;
  font: 9px/11px "Open Sans", sans-serif;
`;

const MaxMark = () => (
  <>
    <rect width="18" height="18" fill="#27a9a4" />
    <path d="M0 0h18L0 14z" fill="#91dbd3" />
    <path d="M5 3h4q5 1 4 4l-2 1.500q3 2 1 4-2 2-6 1l-1-2 3-1-3-2 4-1z" fill="#07605f" />
    <path d="M8 15.500h8" stroke="#063b3a" />
  </>
);

const WindowsBar = () => (
  <Taskbar>
    <Task $w={36}><svg viewBox="0 0 18 18"><path d="m3 4.500 5-.8V8.500H3zM9 3.500l6-.9v5.900H9zM3 9.500h5v4.900l-5-.8zM9 9.500h6v5.900l-6-.9z" fill="#fff" /></svg></Task>
    <Task $w={38}><svg viewBox="0 0 18 18" fill="none" stroke="#eee" strokeWidth="1.200"><circle cx="11" cy="7" r="4" /><path d="m8 10-5 5" /></svg></Task>
    <Task $w={36}><svg viewBox="0 0 18 18" fill="none" stroke="#eee"><path d="M4.500 3.500h9v11h-9zM2.500 5H1.500v8h1M15.500 5h1v8h-1" /></svg></Task>
    <Task $w={42} $open><svg viewBox="0 0 18 18"><path d="M1 2h6l1 2h9v12H1z" fill="#f3ce66" /><path d="M1 6h16v6H1z" fill="#ffeaa0" /><path d="M3 10h12v6h-3v-3H6v3H3z" fill="#38a9dd" /></svg></Task>
    <Task $w={35} $open>
      <svg viewBox="0 0 18 18"><circle cx="9" cy="9" r="8" fill="#f5c62c" /><path d="M2 5A8 8 0 0 1 16 5H9L5.500 11z" fill="#dc4437" /><path d="M2 5a8 8 0 0 0 6.500 12l3.500-6H6z" fill="#299a57" /><circle cx="9" cy="9" r="3.800" fill="#fff" /><circle cx="9" cy="9" r="3" fill="#4285e8" /></svg>
    </Task>
    <NavCell $w={2} />
    <Task $w={38} $open $active><svg viewBox="0 0 18 18"><MaxMark /></svg></Task>
    <Task $w={38} $open>
      <svg viewBox="0 0 18 18"><path d="M1 9c1-5 7-7 12-5l3 5c0 7-6 9-9 7-1-2-1-3-3-3s-3-2-3-4z" fill="#cbe4f2" /><circle cx="5" cy="8" r="1.500" fill="#d64735" /><circle cx="9" cy="5.500" r="1.500" fill="#56a53c" /><circle cx="13" cy="8" r="1.500" fill="#e6b32c" /><circle cx="12" cy="12" r="1.500" fill="#3874bf" /><path d="m8 15 7-12" stroke="#c88445" strokeWidth="2" /><path d="m14 4 1-3h2v2z" fill="#e1c18b" /></svg>
    </Task>
    <Tray>
      <TrayCell $w={19}><svg viewBox="0 0 14 14"><path d="m2 9 5-5 5 5" fill="none" stroke="#eee" strokeWidth="1.200" /></svg></TrayCell>
      <TrayCell $w={18}><svg viewBox="0 0 14 14"><path d="M1.500 4h10v6h-10z" fill="none" stroke="#eee" /><path d="M3 5.500h5v3H3zM12 6h1.500v2H12z" fill="#eee" /></svg></TrayCell>
      <TrayCell $w={18}><svg viewBox="0 0 14 14" fill="none" stroke="#ccc"><path d="M2.500 12Q3 4 12 2.500M5.500 12.500q.5-5 6.500-6M8.500 12.500q0-2.500 3.500-3" /><circle cx="11" cy="12" r=".8" fill="#eee" /></svg></TrayCell>
      <TrayCell $w={18}><svg viewBox="0 0 14 14" fill="none" stroke="#eee"><path d="M1 5h2l3-3v10L3 9H1zM8 5q1.500 2 0 4M10 3.500q3 3.500 0 7M12 2q4 5 0 10" /></svg></TrayCell>
      <TrayCell $w={27}>РУС</TrayCell>
      <Clock>18:37<br />14.03.2019</Clock>
      <Notice>
        <svg viewBox="0 0 14 13"><path d="M1 0h12v10H7l-3 3v-3H1z" fill="#fff" /><path d="M3 3h8M3 5.500h8M3 8h5" stroke="#222" /></svg>
        <Badge>4</Badge>
      </Notice>
    </Tray>
  </Taskbar>
);

/* ---------- main toolbar ---------- */

const T = ({ n, g = 1, on }: { n: string; g?: number; on?: boolean }) => (
  <Tool $g={g} $on={on}><Icon name={n} size={on ? 16 : 17} /></Tool>
);
const Snap = ({ t, g, s }: { t: string; g: number; s: number }) => (
  <Tool $g={g}>
    <SnapText $s={s}>{t}</SnapText>
    <SnapMagnet viewBox="0 0 7 8"><Magnet x={0} y={0} /></SnapMagnet>
  </Tool>
);

const MainToolbar = () => (
  <ToolRow>
    <ToolBar>
      <T n="undo" g={0} /><T n="redo" /><Sep $g={2} />
      <T n="link" g={2} /><T n="unlink" /><T n="bind" g={2} />
      <ToolLift><Select w={42} g={5}>All</Select></ToolLift>
      <T n="selectObj" g={2} on /><T n="byName" /><T n="rect" g={2} /><T n="window" /><Sep $g={3} />
      <T n="move" /><T n="rotate" /><T n="scale" g={3} /><T n="place" g={2} />
      <ToolLift><Select w={42}>View</Select></ToolLift>
      <T n="pivot" g={2} /><Sep $g={2} />
      <T n="manip" /><T n="keyboard" g={2} on /><Sep $g={2} />
      <Snap t="3" g={2} s={11} /><T n="angle" g={1} /><Snap t="%" g={1} s={9} /><T n="spinner" g={2} /><Sep $g={2} />
      <Tool $g={1}>
        <NamedSets>
          <svg viewBox="0 0 18 18"><path d="M5 2Q3 2 3.500 5T2 8q2 0 1.500 3M9 2q2 0 1.500 3" fill="none" stroke="#ddd" strokeWidth="1.200" /><path d="m7 11 8-8 1.500 1.500-8 8z" fill="#f4bf3a" /><path d="M3 15.500h9" stroke="#eee" strokeWidth="3" strokeDasharray="2 1" /></svg>
        </NamedSets>
      </Tool>
      <ToolLift><Select w={73} g={2} dark>Create Selection Se</Select></ToolLift>
      <Sep $g={2} />
      <T n="mirror" g={0} /><T n="align" g={3} /><Sep $g={2} />
      <T n="layers" g={0} /><T n="layerExp" g={3} /><Sep $g={1} />
      <T n="ribbon" g={2} on /><T n="curve" /><T n="schematic" g={2} /><Sep $g={2} />
      <T n="material" g={2} /><Sep $g={1} />
      <T n="rSetup" g={2} /><T n="rFrame" g={2} /><T n="render" /><T n="cloud" g={2} /><T n="gallery" />
    </ToolBar>
  </ToolRow>
);

const menus: [string, number][] = [
  ['Edit', 31.500], ['Tools', 38], ['Group', 41.500], ['Views', 39], ['Create', 42.500], ['Modifiers', 55], ['Animation', 58],
  ['Graph Editors', 71.500], ['Rendering', 54], ['Civil View', 52], ['Customize', 58], ['Scripting', 48.500], ['Corona', 42], ['Help', 30],
];

export default function App() {
  return (
    <Shell>
      <GlobalStyle />
      <TitleBar>
        <Logo viewBox="0 0 18 18" preserveAspectRatio="none"><MaxMark /></Logo>
        <TitleText>13.max - Autodesk 3ds Max 2016 - Student Version (Не отвечает)</TitleText>
        <WinButton><svg viewBox="0 0 9 9"><path d="M1 4.500h7" stroke="#222" /></svg></WinButton>
        <WinButton><svg viewBox="0 0 9 9"><path d="M1 2.500h5.500V8H1zM3 2.500V1h5v5H6.500" fill="none" stroke="#ccc" /></svg></WinButton>
        <WinButton $close><svg viewBox="0 0 9 9"><path d="m1 1 7 7M8 1 1 8" stroke="#fff" /></svg></WinButton>
      </TitleBar>
      <MenuBar>
        <MaxButton>MAX</MaxButton>
        {menus.map(([label, w]) => <MenuItem key={label} $w={w}>{label}</MenuItem>)}
      </MenuBar>
      <MainToolbar />
      <RibbonTabs>
        <RibbonTab $w={62} $active $pad={14}>Modeling</RibbonTab>
        <RibbonTab $w={88} $pad={17}>Freeform</RibbonTab>
        <RibbonTab $w={73}>Selection</RibbonTab>
        <RibbonTab $w={83}>Object Paint</RibbonTab>
        <RibbonTab $w={61}>Populate</RibbonTab>
        <svg width="20" height="13" viewBox="0 0 20 13"><rect y="3" width="10" height="6" rx="1" fill="#eee" /><path d="m3 5 2 2 2-2z" fill="#333" /><path d="m15 5 1.500 2L18 5z" fill="#ddd" /></svg>
      </RibbonTabs>
      <RibbonPanel><RibbonGroup>Polygon Modeling</RibbonGroup></RibbonPanel>
      <Body>
        <SceneExplorer />
        <Center><Viewport /><Timeline /></Center>
        <CommandPanel />
      </Body>
      <StatusBar />
      <WindowsBar />
    </Shell>
  );
}
